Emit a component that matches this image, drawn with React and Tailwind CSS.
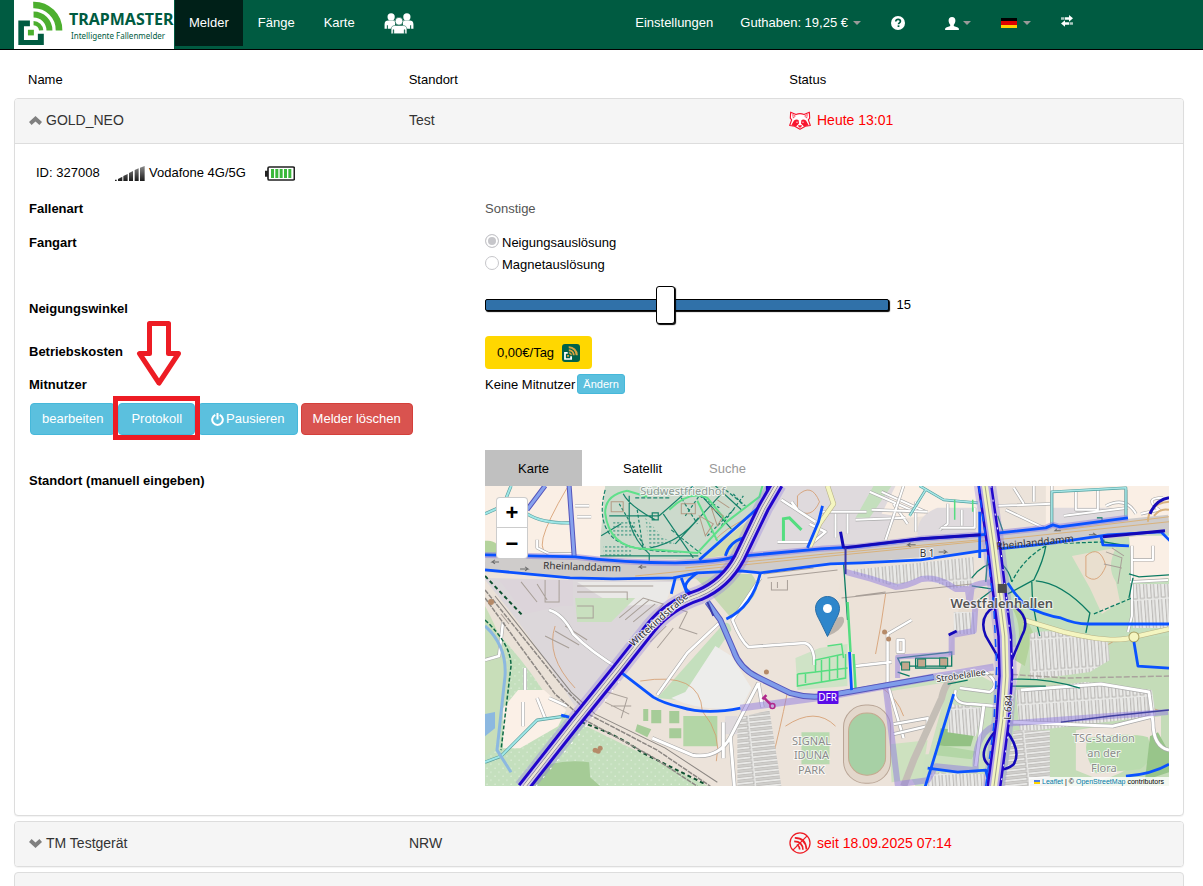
import React, { useState } from "react";

const DEVICES = [
  { id: "327008", name: "GOLD_NEO", place: "Test", status: "Heute 13:01", icon: "raccoon" },
  { id: "327009", name: "TM Testgerät", place: "NRW", status: "seit 18.09.2025 07:14", icon: "offline" },
];

/* ---------- icons ---------- */

const LogoMark = ({ className, box = "#005b41", waves = "#4caf2e" }) => (
  <svg viewBox="0 0 136 136" className={className} aria-hidden="true">
    <path d="M1 59h35v17H18v42h42V99h18v34H1z" fill={box} />
    <path d="M30 87h18v17H30z" fill={waves} />
    <g fill="none" stroke={waves}>
      <path d="M46 12a76 76 0 0 1 78 77" strokeWidth="20" />
      <path d="M47 41a48 48 0 0 1 48 48" strokeWidth="18" />
      <path d="M47 67a23 23 0 0 1 23 22" strokeWidth="13" />
    </g>
  </svg>
);

const GroupIcon = () => (
  <svg viewBox="0 0 90 64" className="w-[30px] h-[21px]" aria-hidden="true">
    <g fill="#fff">
      <circle cx="21" cy="12" r="11" />
      <circle cx="69" cy="12" r="11" />
      <path d="M1 48V34c0-8 5-11 11-11h18c3 0 4 1 5 3-4 7-2 12 1 16-8 1-12 2-13 6H11V37H8v11z" />
      <path d="M89 48V34c0-8-5-11-11-11H60c-3 0-4 1-5 3 4 7 2 12-1 16 8 1 12 2 13 6h12V37h3v11z" />
    </g>
    <path
      d="M21 63V50c0-8 5-12 12-12h24c7 0 12 4 12 12v13h-6V51h-2v12H29V51h-2v12z"
      fill="#fff"
      stroke="#005b41"
      strokeWidth="1.500"
    />
    <circle cx="45" cy="25" r="12" fill="#fff" stroke="#005b41" strokeWidth="2" />
  </svg>
);

const UserIcon = () => (
  <svg viewBox="0 0 14 13" className="w-[14px] h-[13px]" aria-hidden="true">
    <path
      d="M7 0c2.200 0 3.500 1.500 3.400 3.800C10.300 5.500 9.600 6.900 8.800 7.800v1.100c1.200.8 4.200 1 4.900 2.300.2.500.2 1.200.2 1.800H.1c0-.6 0-1.300.2-1.800C1 9.900 4 9.700 5.200 8.900V7.800C4.400 6.900 3.700 5.500 3.600 3.800 3.500 1.500 4.800 0 7 0z"
      fill="#fff"
    />
  </svg>
);

const HelpIcon = () => (
  <svg viewBox="0 0 14 14" className="size-[14px]" aria-hidden="true">
    <circle cx="7" cy="7" r="7" fill="#fff" />
    <path d="M4.800 5.600c0-1.500.9-2.300 2.300-2.300s2.300.8 2.300 2c0 1.600-1.900 1.500-1.900 3" fill="none" stroke="#005b41" strokeWidth="1.700" />
    <path d="M6.600 9.300h1.800V11H6.600z" fill="#005b41" />
  </svg>
);

const TransferIcon = () => (
  <svg viewBox="0 0 36 36" className="size-3" aria-hidden="true" fill="#fff">
    <path d="M24 0l12 10-12 10v-6H12V7h12zM1 7h4v7H1zM7 7h3v7H7z" />
    <path d="M12 16v6h12v7H12v6L0 25.500zM26 22h3v7h-3zM31 22h4v7h-4z" />
  </svg>
);

const GermanFlag = () => (
  <svg viewBox="0 0 16 10" className="w-4 h-[10px]" aria-hidden="true">
    <path d="M0 0h16v4H0z" fill="#000" />
    <path d="M0 3h16v4H0z" fill="#dd0000" />
    <path d="M0 7h16v3H0z" fill="#ffce00" />
  </svg>
);

const Caret = () => (
  <svg viewBox="0 0 8 4" className="w-2 h-1" aria-hidden="true">
    <path d="M0 0h8L4 4z" fill="#999" />
  </svg>
);

const Chevron = ({ up }) => (
  <svg viewBox="0 0 13 9" className="w-[13px] h-[9px]" aria-hidden="true">
    <path d={up ? "M6.500 0L13 6 10.400 9 6.500 5.600 2.600 9 0 6z" : "M6.500 9L13 3 10.400 0 6.500 3.400 2.600 0 0 3z"} fill="#808080" />
  </svg>
);

const PowerIcon = () => (
  <svg viewBox="0 0 13 13" className="size-[13px]" aria-hidden="true" fill="none" stroke="#fff" strokeWidth="2">
    <path d="M4.300 1.800a5.300 5.300 0 1 0 4.400 0" />
    <path d="M6.500 0v6.500" />
  </svg>
);

const SignalIcon = () => (
  <svg viewBox="0 0 90 45" className="w-[30px] h-[15px]" aria-hidden="true">
    <defs>
      <linearGradient id="bars" x1="0" y1="0" x2="0" y2="1">
        <stop offset="0" stopColor="#8a8a8a" />
        <stop offset="1" stopColor="#1c1c1c" />
      </linearGradient>
    </defs>
    <path
      d="M0 41h5v4H0zM9 39l13-7v13H9zM25 30l13-6v21H25zM42 21l12-6v30H42zM59 12l12-5v38H59zM75 5l14-5v45H75z"
      fill="url(#bars)"
    />
  </svg>
);

const BatteryIcon = () => (
  <svg viewBox="0 0 90 45" className="w-[30px] h-[15px]" aria-hidden="true">
    <path d="M0 14h10v18H0z" fill="#222" />
    <rect x="9" y="3" width="79" height="39" rx="4" fill="#fff" stroke="#222" strokeWidth="5" />
    <path d="M18 9h9v27h-9zM31 9h9v27h-9zM44 9h9v27h-9zM57 9h9v27h-9zM70 9h9v27h-9z" fill="#3bb83b" />
  </svg>
);

const RaccoonIcon = () => (
  <svg viewBox="0 0 66 56" className="w-[22px] h-[19px]" aria-hidden="true">
    <path
      d="M5 3l16 7q12-5 24 0l16-7 1 18-4 5 6 17-15 2-16 9-16-9-15-2 6-17-4-5z"
      fill="#fff"
      stroke="#f8152f"
      strokeWidth="3.500"
      strokeLinejoin="round"
    />
    <path d="M11 10l8 4-6 7zM55 10l-8 4 6 7z" fill="none" stroke="#f8152f" strokeWidth="2" />
    <path d="M7 42l8-14q8-6 14-1l1 10-9 9zM59 42l-8-14q-8-6-14-1l-1 10 9 9z" fill="#f8152f" />
    <circle cx="24" cy="33" r="2" fill="#fff" />
    <circle cx="42" cy="33" r="2" fill="#fff" />
    <path d="M27 42h12l-3 7h-6z" fill="#f8152f" />
  </svg>
);

const OfflineIcon = () => (
  <svg viewBox="0 0 68 68" className="size-[22px]" aria-hidden="true" fill="none" stroke="#ee1c24">
    <circle cx="34" cy="34" r="31" strokeWidth="4" />
    <path d="M12 56L56 12" strokeWidth="4" />
    <path d="M18 18q34 0 36 36M16 29q26 0 27 26M24 39q9 4 9 15" strokeWidth="5" />
  </svg>
);

/* ---------- map ---------- */

const Road = ({ d, w = 3, casing = "#aaa", fill = "#fff" }) => (
  <g fill="none" strokeLinejoin="round">
    <path d={d} stroke={casing} strokeWidth={w + 1.2} />
    <path d={d} stroke={fill} strokeWidth={w} />
  </g>
);

const WITTEKIND = "M38 302L90 236 132 184 166 141Q184 119 214 109 240 98 254 72L278 22 292 -2";
const L684 = "M499 -2L508 61 514 110 519 150 520 190 517 234 508 302";
const NORTH_LANE = "M0 69L90 71Q140 77 190 77 235 76 248 71L335 63 370 61 435 53 495 49 560 42 567 39 574 41 642 32";
const SOUTH_LANE = "M0 84L85 92 128 93 188 92 212 87 255 85 275 87 345 78 376 77 435 74 495 65 560 58 622 49 675 46 684 55";
const STROBEL = "M222 116l13 18 13 30q6 18 24 27l33 16q20 6 40 2l103-18";

const CityMap = () => (
  <svg
    viewBox="0 0 683 300"
    preserveAspectRatio="xMidYMid slice"
    className="block w-full h-full"
    role="img"
    aria-label="Karte Dortmund Westfalenhallen"
    fontFamily="'Noto Sans', sans-serif"
  >
    <defs>
      <pattern id="lot" width="7" height="32" patternUnits="userSpaceOnUse" patternTransform="rotate(-4)">
        <rect width="7" height="32" fill="#e9e9e7" />
        <path d="M1 0v30h4V0" fill="none" stroke="#b5b3b0" strokeWidth="1" />
      </pattern>
      <pattern id="lotFlat" width="34" height="5" patternUnits="userSpaceOnUse" patternTransform="rotate(-6)">
        <rect width="34" height="5" fill="#e9e9e7" />
        <path d="M0 1h32v3H0" fill="none" stroke="#b5b3b0" strokeWidth="1" />
      </pattern>
      <pattern id="dots" width="8" height="8" patternUnits="userSpaceOnUse">
        <rect width="8" height="8" fill="#c4dfbd" />
        <circle cx="2" cy="2" r=".7" fill="#e4f1e0" />
        <circle cx="6" cy="6" r=".7" fill="#e4f1e0" />
      </pattern>
      <pattern id="graves" width="4" height="4" patternUnits="userSpaceOnUse">
        <path d="M0 1h2" stroke="#0c8068" strokeWidth="1" />
      </pattern>
    </defs>

    {/* land use */}
    <rect width="683" height="300" fill="#ece3da" />
    <path d="M0 0h120v72L0 68z" fill="#faefe5" />
    <path d="M0 55q14-2 16 14L0 68z" fill="#b4d39c" />
    <path d="M120 0h174L214 74l-99-3V55z" fill="#ccdacc" />
    <path d="M290 12L262 66 216 73z" fill="#d3dcb1" />
    <path d="M296 0h130l-30 60-132 8z" fill="#dfdadd" />
    <path d="M388 0h18l-22 32h-14z" fill="#c4dfbd" />
    <path d="M410 0h82v26l-70 6-26-4z" fill="#faefe5" />
    <path d="M452 22h38v28h-58q-2-20 20-28z" fill="#dfdadd" />
    <path d="M512 0h171v32l-165 18z" fill="#faefe5" />
    <path d="M512 0h48v44l-46 5z" fill="#ece3da" />
    <path d="M565 22h76v12l-76 8z" fill="#dfdadd" />
    <path d="M0 92l90 2 98 1-28 45-50 60-30 30Q50 190 0 110z" fill="#dcd7da" />
    <path d="M92 96h96l-8 22-50 2z" fill="#eae9e7" />
    <path d="M90 112h60l-24 24H92z" fill="#c9e0bf" />
    <path d="M206 88h60q18 20-22 42l-22-26z" fill="#c6d9b2" />
    <path d="M14 94h74v26H76L40 128z" fill="#dcd4da" />
    <path d="M0 94q50 60 92 130l136 74H0z" fill="#eae1d7" />
    <path d="M0 134q40 40 65 82l28 20 130 64H0z" fill="url(#dots)" />
    <path d="M33 204h26l22 20-8 16-38 22H18v-40z" fill="#fbf0e7" />
    <path d="M0 120q22 40 24 74L10 262 0 270z" fill="#c8deb9" />
    <path d="M48 284q26-12 56-8l1 15 10 9H42z" fill="#a5cb96" />
    <path d="M172 212l66-74q6-4 8 6l-40 58-14 12z" fill="#c4dfbd" />
    <path d="M200 206l30-46 16 10 20 32-10 20q-40 4-70-10z" fill="#ededeb" />
    <path d="M158 223h5v12h-5zM166 224h10v13h-10zM184 225h10v12h-10zM152 238l14 5-4 8-12-6zM184 242h12v10h-12z" fill="#a6cc98" />
    <path d="M198 230h34v30h-34z" fill="#b3d6a6" />
    <path d="M240 230h12v18h-14z" fill="#dfdadd" />
    <path d="M515 48l168-14v140h-40L520 160 508 90z" fill="#c4dfbd" />
    <path d="M586 70l44-8q-10 20 0 34l4 20-18 12-12-26z" fill="#e9dfcf" />
    <path d="M643 50h40v42l-36 4z" fill="#faefe5" />
    <path d="M540 160l143-10v150H505z" fill="#c4dcb8" />
    <path d="M404 196l80-12 30 16-6 100H430l-16-28z" fill="#cbe0bf" />
    <path d="M470 98l42 8-4 74-52 4q-30-30-20-70z" fill="#e6dcd0" />
    <path d="M525 120q14 20 4 54l10 6 8-34-16-34z" fill="#b4d39c" />
    <path d="M356 92l130 10-14 24-12 56-120 22-8-12z" fill="#ece2d8" />
    <path d="M310 172l24-10 28-4v42l-50 4z" fill="#cfe3c6" />
    <path d="M399 206l64-10-20 72h-36z" fill="#e9dfd5" />
    <path d="M404 258l38-4-6 38-30 4z" fill="#cde1bf" />
    <path d="M455 242l34 4-4 14h-34z" fill="#93c184" />
    <path d="M454 259l36 6-4 8-36-4z" fill="#b3d6a6" />
    <path d="M590 244l85-14v24q-24 30-60 40l-25-10z" fill="#ece3da" />
    <path d="M602 252q40-6 60-1 8 22-8 32l-44 4q-14-20-8-35z" fill="#b9dbae" />
    <path d="M664 250l8-4 11 20v20l-24 8z" fill="#98c58a" />
    <path d="M316 246h28v32h-28z" fill="#b9dab0" />

    {/* stadium oval */}
    <rect x="358" y="219" width="47" height="78" rx="22" fill="#e3d7cb" stroke="#b9a596" />
    <rect x="363" y="227" width="37" height="62" rx="18" fill="#a7d0a5" stroke="#c5a98f" />
    <g fill="none" stroke="#d59a6a" strokeWidth=".8">
      <path d="M82 2q-20 34-24 50t10 20M230 54q8-10 32-22M400 108q-4 30-10 60M302 206q-8 40-16 70" />
      <path d="M155 195q60-10 62 30 20 24 14 50M70 140q-10 30 20 62M300 240q30-20 50 0M394 200q18 12 24 30" />
      <path d="M600 70q14-12 20 10-8 20-20 10zM545 235q80-30 130-10M560 160q40 14 70-6M312 10q14-14 22 6-8 18-22 8z" />
    </g>

    {/* car parks */}
    <g fill="url(#lot)">
      <path d="M366 84l122-13v28l-22 4-30-12-26 10-44-14z" />
      <path d="M544 148q20-8 78 8l2 18-20 12-60 8z" />
      <path d="M530 204l70-8 66 8 4 26-136 16z" />
      <path d="M647 98h36v44h-36z" />
      <path d="M464 218l34 4-8 28-28-4z" />
      <path d="M442 286l60 2v12h-64z" />
      <path d="M468 126h22v22h-22z" />
    </g>
    <g fill="url(#lotFlat)">
      <path d="M252 232l32-8 12 76h-44z" />
      <path d="M528 244h36v56h-46z" />
    </g>
    <g fill="none" stroke="#a89f98" strokeWidth="1">
      <path d="M134 132l24-20 20 6-22 26M140 134l24-20M148 136l22-18M92 120h16v12H92M92 100h76M92 106h50v8" />
      <path d="M36 96l16 20M52 98l10 16M60 94v22h14V94M16 128l8 10M60 150l24 12M70 145l24 14M80 140l22 14" />
      <path d="M158 150l14-18M165 156l16-16M172 162l16-20M186 120l16 6-8 16 18 6M122 206l20 6-6 20M126 220h20M120 216l24 12" />
      <path d="M278 88l50-6M282 92l70-8M286 96v8h16v-10M292 96v6M356 112l130-14M370 110l30-4M620 66l16 6-4 26M626 62l12 8M618 78l18 4" />
    </g>

    {/* cemetery paths */}
    <path d="M128 36h22v16h-22zM160 32l18 20 12 6-26 4zM118 60h28v10h-28z" fill="url(#graves)" />
    <g fill="none" stroke="#17836b" strokeWidth="1.200">
      <path d="M124 30h50M144 10v26q6 20 20 32v8M174 30l34-30M178 28l30 44M170 34q-26-14-32-26M167 27h6v7h-6z" />
      <path d="M165 62q30-6 48-30M190 58l46-50M212 5l34 38M230 0l26 24M116 50l20-12M115 70h98" />
      <path d="M200 30l14-20 20 12M222 50l28-28M236 40l22-30M248 8l10 12M152 24l6 40M134 18l26 44" strokeDasharray="3 2" />
      <path d="M120 4q-8 30 6 46t70 16M160 6l30 2M150 12h36M186 44l30 24M196 12l16 26M240 4l20 16" strokeDasharray="4 2" />
    </g>
    <path
      d="M142 5q-22 4-22 22 4 34 38 36l54 4 28-30 34-26 3-11M212 15l20 40M142 5l20 6M184 24q20-20 38-12l18 22"
      fill="none"
      stroke="#5fe08a"
      strokeWidth="2"
    />
    <g fill="none" stroke="#b29a84" strokeWidth="1">
      <path d="M126 16h12v10h-12zM196 18h14v10h-14zM214 30l14 8-8 12zM226 22l12 8-6 10zM232 14l12 8" />
    </g>

    {/* local streets */}
    <Road d="M90 20h14M92 31h14M52 54v8l12 6h26" w={2} />
    <Road d="M296 14l34 22M292 56h36l12-10-16-8M312 24l-6-8" w={2.500} />
    <Road d="M335 26h46M350 28v24M362 28v20M384 6l46 20M396 6l44 20M408 18l14 20M430 16v30M370 34l50-2M462 18v20l-8 6M476 24v16" w={2} />
    <Road d="M418 0l-18 54M386 24l56 2M455 42l34 0v-20" w={2} />
    <Road d="M512 20l54-2M520 24l38 18M528 2l10 16M548 0v16M578 30l64-8M590 6v18h22V4M620 20q20-10 30 8M655 28l18-4q-16-12 4-12" w={2} />
    <Road d="M64 124Q78 128 88 148 106 166 136 184M40 204v-22M38 240v-24M60 232l-8-20M82 220l-18-8M0 174l14-4 4-34" w={2.500} />
    <Road d="M172 209l30-42 34-32M275 92l-28 42q8 20 16 27l56-4q10 2 10 22" w={2.500} />
    <Road d="M167 252l40 17q26 4 38-18l28-54M245 250l4 50M238 236q0 20 0 36M273 197l4 24" w={3} />
    <Road d="M402 148v50l16 54M402 148l24-14M370 180l36-4M412 154h6v12h-6z" w={2.500} />
    <Road d="M474 202l30 4q12-8-4-20M470 204q-4 14 16 14l24 2M408 238l34-6v8l-34 8" w={2.500} />
    <Road d="M535 204l80-6 48 8 4 30q0 24 16 28M527 236l100 4 40-10M498 220l-8 60" w={3} />
    <Road d="M646 60v70l-4 16M644 96l38-2M566 0v40M640 4v26M645 74h22V60" w={2} />
    <Road d="M566 40V6l74-4v30" w={1.500} casing="#4f9f9f" fill="#a8e6e6" />
    <Road d="M434 0l24 14 34 3M440 4l-16 26" w={1.500} casing="#4f9f9f" fill="#a8e6e6" />
    <Road d="M26 0l-8 20-18 8M42 28q16 10 46 9M0 276l16-6 36-36 28-4" w={2} casing="#5c9f9f" fill="#9fe7e7" />
    <path d="M0 140q22 20 20 50l-8 74 14 22" fill="none" stroke="#8cb8e0" strokeWidth="3" />
    <path d="M0 228l10-2v16L0 250z" fill="#8cb8e0" />
    <path d="M0 134q26 24 26 46l-10 84" fill="none" stroke="#0e6a45" strokeWidth="1.500" strokeDasharray="4 2" />
    <path d="M0 90L38 130M96 236q40 14 60 30l64 32" fill="none" stroke="#0e5030" strokeWidth="2" strokeDasharray="4 3" />
    <g fill="none" stroke="#8c8783" strokeWidth="1.500">
      <path d="M0 104l78 97 27 28 67 35 53 36M0 112l70 96 30 26 66 36 46 30" strokeDasharray="5 1" />
      <path d="M10 110l76 96 24 22 70 34 52 34" strokeWidth="1" />
      <path d="M470 190l50-2 60 4 103-2" stroke="#aaa49d" strokeDasharray="6 2" />
    </g>
    <path d="M470 192q-10 2-14 20l-28 62-10 26" fill="none" stroke="#c4beb6" strokeWidth="7" />

    {/* park footpaths */}
    <g fill="none" stroke="#0b7b63" strokeWidth="1.300">
      <path d="M522 108l26-14M548 94q10-20 12-34M546 96q0 26 8 54M550 95q26 2 54 32l-4 20M512 30l8 24M486 92q14-18 30-14 8 8 10 18" />
      <path d="M502 70l-2 26M488 118l24-18M486 100l26 4M510 200h50M516 194q40-4 78 8" />
      <path d="M560 60q-22 12-34 36M608 128l38-16M560 58l60-2" strokeDasharray="4 2" />
      <path d="M357 62l5 72M611 32h5l2 24 24 4M643 88l10 3 30-2M647 92l-4 20M412 172l54-6v14h-50z" />
      <path d="M430 172h30v10h-30zM412 186l12 4M482 194l-20 4" />
    </g>
    <g fill="#c3a78d" stroke="#0b7b63">
      <path d="M416 176h8v8h-8zM432 173h8v8h-8zM454 172h8v8h-8z" />
    </g>
    <g fill="none" stroke="#55dd80">
      <path d="M362 116l3 50M368 168l2 34" strokeWidth="2.500" />
      <path d="M312 188l18-2v-12l28-6M312 188v12l48-8v-24M330 186l32-4M320 187v10M336 174v22M344 172v22M352 170v22M342 160l14-2 2 14" strokeWidth="1.500" />
      <path d="M298 55v-22l6-1 12 12" strokeWidth="3" />
      <path d="M469 14v20M487 14v12" strokeWidth="1.500" />
    </g>

    {/* trunk road */}
    <path d="M0 77L90 82 188 86 248 79 335 71 495 57 683 38" fill="none" stroke="#cfcccb" strokeWidth="18" />
    <path d="M150 90L248 80 345 70 500 55 683 36M200 82l140-14 155-14M570 45l113-14" fill="none" stroke="#d8b27c" strokeWidth="1" />
    <path d="M662 36q0-18 21-20M668 30q6-8 15-6" fill="none" stroke="#d8b27c" strokeWidth="2" />

    {/* yellow secondary roads */}
    <Road d="M342 0l6 18-14 20-10 24" w={4} casing="#b9b387" fill="#f4f5c0" />
    <Road d="M538 134l40 12q50 12 70 5l35-8" w={4} casing="#b9b387" fill="#f4f5c0" />
    <circle cx="648" cy="151" r="5" fill="#f4f5c0" stroke="#a89f60" />

    {/* transit halo lines */}
    <g fill="none" stroke="#8f7be0" strokeOpacity=".5" strokeLinejoin="round">
      <path d="M255 222l90-12 103-19 60-10" strokeWidth="7" />
      <path d="M360 86l26 7 24 8q10 0 26-8 12-2 24 4l10 6h12l2 14 2-16q10-6 28-4M490 115l-2 30-22 4v20" strokeWidth="6" />
      <path d="M400 200l12 98 30-4 8-14 40 4q-2-40 24-46l110-8 58-4" strokeWidth="6" />
      <path d="M412 192v-21l54-3" strokeWidth="5" />
      <path d={WITTEKIND} strokeWidth="19" strokeOpacity=".35" />
      <path d={L684} strokeWidth="22" strokeOpacity=".35" />
      <path d={NORTH_LANE} strokeWidth="6" />
    </g>
    <g fill="none">
      <path d={STROBEL} stroke="#5555bb" strokeWidth="6" />
      <path d={STROBEL} stroke="#7f9cea" strokeWidth="4" />
      <path d="M60 0L42 24M84 0l5 70" stroke="#5555bb" strokeWidth="5" />
      <path d="M60 0L42 24M84 0l5 70" stroke="#88a2ee" strokeWidth="3" />
      <path d="M575 236l50-6 58-6" stroke="#4040a0" strokeWidth="1.500" />
    </g>

    {/* cycle routes */}
    <g fill="none" stroke="#0a52ff" strokeWidth="2.800" strokeLinejoin="round">
      <path d={NORTH_LANE} />
      <path d={SOUTH_LANE} />
      <path d="M214 74l70-62M240 70q4-14 18-18 8 4-4 14M275 87q-8 34-34 46M190 92l-4 16M196 92l6 16M212 87q-20 14-6 20" />
      <path d="M133 184l35 27q10 6 27 10 26 8 60 1M76 229l8 2" />
      <path d="M522 97q10 16 20 24 16 8 33 11 14 6 27 6h81" />
      <path d="M648 156l4 24 31 2M494 26v46M364 166l2 38M468 208l-22 72-7 22M442 282l30 4 28-2 4 16M640 290q26-2 43-12M337 20l-4 16-11 26" />
      <path d="M615 50l2 9 26 1" />
    </g>
    <g fill="none" stroke="#1409b8" strokeWidth="3">
      <path d="M358 62l77-9 60-4M355 46l3 16M664 28q6-14 19-16M282 0v16M463 149l8-4M617 51l62-6" />
      <path d="M360 62v26M222 116l6 14" strokeWidth="2" stroke="#3a38a8" />
      <path d="M510 120q-18 10-10 30l14 24M528 120q18 12 8 30l-10 24" strokeWidth="2.500" />
      <path d="M514 240q-24 26-12 38 14 10 26 0 8-14-8-34" strokeWidth="2.500" />
    </g>
    <g fill="none">
      <path d={WITTEKIND} stroke="#2206cc" strokeWidth="13" />
      <path d={WITTEKIND} stroke="#cfc6e6" strokeWidth="7" />
      <path d={WITTEKIND} stroke="#6e6b80" strokeWidth="3.500" />
      <path d={WITTEKIND} stroke="#ece8d4" strokeWidth="2.500" />
      <path d={L684} stroke="#2206cc" strokeWidth="15" />
      <path d={L684} stroke="#b3a4e4" strokeWidth="10" />
      <path d={L684} stroke="#f1f3c2" strokeWidth="6" />
      <path d={L684} stroke="#a7a98a" strokeWidth="1" />
      <path d="M51 300l50-60 34-46" stroke="#fff" strokeWidth="1" strokeDasharray="2 9" />
      <path d="M505 0l10 64 7 60 5 60-4 60-8 56" stroke="#fff" strokeWidth="1" strokeDasharray="2 12" />
      <path d="M493 0l8 60 7 60 3 60-3 60-8 60" stroke="#0a52ff" strokeWidth="1.500" strokeDasharray="8 6" />
    </g>

    <g stroke="#6b6b6b" fill="none" strokeWidth="1">
      <path d="M14 76H7l3-2M7 76l3 2M35 83h8l-3-2M43 83l-3 2M161 81h-7l3-2M154 81l3 2M453 66h8l-3-2M461 66l-3 2M430 59h-8l3-2M422 59l3 2M603 49h7l-3-2M575 45h-6l2-2" />
    </g>
    <path d="M512 98h9v9h-9z" fill="#4d4d4d" />
    <g fill="none" stroke="#b0288c" strokeWidth="2.500">
      <circle cx="287" cy="220" r="2.500" strokeWidth="1.500" />
      <path d="M279 212l6 6M277 213l4-4" />
    </g>
    <g fill="#b58a68">
      <circle cx="110" cy="264" r="2.500" />
      <circle cx="115" cy="262" r="2.500" />
      <circle cx="113" cy="265" r="2.500" />
      <circle cx="281" cy="186" r="2.500" />
      <circle cx="399" cy="146" r="2.500" />
      <circle cx="403" cy="153" r="2.500" />
      <circle cx="6" cy="116" r="3" />
    </g>

    {/* labels */}
    <g paintOrder="stroke" stroke="#fff" strokeOpacity=".75" strokeWidth="2" strokeLinejoin="round" fontSize="10">
      <text x="155" y="9" fill="#8d9a92" fontSize="11">Südwestfriedhof</text>
      <text x="58" y="83" fill="#333" transform="rotate(2 58 83)" stroke="none">Rheinlanddamm</text>
      <text x="511" y="64" fill="#333" transform="rotate(-6 511 64)" stroke="none">Rheinlanddamm</text>
      <text x="434" y="71" fill="#333">B 1</text>
      <text x="148" y="161" fill="#333" transform="rotate(-42 148 161)">Wittekindstraße</text>
      <text x="451" y="196" fill="#333" transform="rotate(-8 451 196)" fontSize="9">Strobelallee</text>
      <text x="525" y="234" fill="#333" transform="rotate(-86 525 234)">L 684</text>
      <text x="516" y="122" fill="#555" fontSize="13" fontWeight="600" textAnchor="middle">Westfalenhallen</text>
      <g fill="#8b8b8b" fontSize="11" textAnchor="middle">
        <text x="326" y="259">SIGNAL</text>
        <text x="326" y="273">IDUNA</text>
        <text x="326" y="288">PARK</text>
        <text x="618" y="256">TSC-Stadion</text>
        <text x="618" y="271">an der</text>
        <text x="618" y="286">Flora</text>
      </g>
    </g>
    <rect x="332" y="205" width="21" height="13" rx="1" fill="#5a0be8" />
    <text x="342" y="215" fill="#fff" fontSize="10" textAnchor="middle">DFR</text>
  </svg>
);

const MapMarker = () => (
  <svg viewBox="0 0 40 41" className="w-10 h-[41px]" aria-hidden="true">
    <path d="M13 40L22 22q8-4 7 4-3 9-16 14z" fill="#000" fillOpacity=".2" />
    <path
      d="M12.500 .5C5.600 .5.500 6 .5 12.500c0 4.500 2.300 8.500 5 13.500l7 14.500 7-14.500c2.700-5 5-9 5-13.500C24.500 6 19.400.5 12.500.5z"
      fill="#2e86cb"
      stroke="#2a6ea6"
    />
    <circle cx="12.500" cy="12.500" r="4.500" fill="#fff" />
  </svg>
);

/* ---------- page ---------- */

const NavBar = () => (
  <nav className="flex h-[50px] items-start border-b border-black bg-[#005b41] pl-[14px] pr-[130px] text-white">
    <a href="#home" className="mr-px flex h-[49px] w-40 shrink-0 items-start bg-white">
      <LogoMark className="ml-1 mt-px size-[45px] shrink-0" />
      <span className="ml-[6px] flex flex-col pt-[9px] font-['Noto_Sans',sans-serif] text-[#005b41]">
        <span className="text-[16px] leading-[20px] font-bold">TRAPMASTER</span>
        <span className="pl-[2px] text-[8px] leading-[14px] whitespace-nowrap">Intelligente Fallenmelder</span>
      </span>
    </a>
    <div className="flex h-[46px]">
      <a href="#melder" className="flex items-center bg-[#002018] px-[14px]">Melder</a>
      <a href="#faenge" className="flex items-center px-[15px]">Fänge</a>
      <a href="#karte" className="flex items-center px-[14px]">Karte</a>
      <a href="#gruppe" className="flex items-center px-[15px]" aria-label="Gruppe">
        <GroupIcon />
      </a>
    </div>
    <div className="ml-auto flex h-[46px]">
      <a href="#einstellungen" className="flex items-center px-3">Einstellungen</a>
      <button className="flex items-center gap-[5px] px-[15px]">
        Guthaben: 19,25 € <Caret />
      </button>
      <a href="#hilfe" className="flex items-center px-[15px]" aria-label="Hilfe">
        <HelpIcon />
      </a>
      <button className="ml-[10px] flex items-center gap-1 px-[15px]" aria-label="Konto">
        <UserIcon />
        <Caret />
      </button>
      <button className="flex items-center gap-[6px] px-[15px]" aria-label="Sprache">
        <GermanFlag />
        <Caret />
      </button>
      <a href="#wechseln" className="flex items-center pb-1 pl-[15px]" aria-label="Wechseln">
        <TransferIcon />
      </a>
    </div>
  </nav>
);

const Protocol = () => (
  <div className="relative">
    <button className="h-8 rounded-[4px] border border-[#46b8da] bg-[#5bc0de] px-3 text-white">Protokoll</button>
    <div className="pointer-events-none absolute -inset-x-[5px] -top-[7px] -bottom-[5px] border-[5px] border-[#ed1c24]" />
    <svg
      viewBox="0 0 46 65"
      className="pointer-events-none absolute bottom-[49px] left-[18px] h-[65px] w-[46px]"
      aria-hidden="true"
    >
      <path
        d="M13.500 2.500h19v30h10L23 62 3.500 32.500h10z"
        fill="#fff"
        stroke="#ed1c24"
        strokeWidth="5"
        strokeLinejoin="round"
      />
    </svg>
  </div>
);

const MapPanel = () => (
  <div>
    <div className="flex h-9">
      <button className="bg-[#c0c0c0] px-[33px] pt-[2px]">Karte</button>
      <button className="ml-2 px-[33px] pt-[2px]">Satellit</button>
      <input
        type="text"
        aria-label="Suche"
        placeholder="Suche"
        className="ml-[14px] w-40 pt-[2px] outline-none placeholder:text-[#999]"
      />
    </div>
    <div className="relative h-[300px] overflow-hidden">
      <CityMap />
      <div className="absolute top-[11px] left-[11px] flex w-[32px] flex-col rounded-[4px] border border-black/20 bg-white font-bold">
        <button aria-label="Vergrößern" className="flex h-[30px] items-center justify-center border-b border-[#ccc] text-[22px]">
          +
        </button>
        <button aria-label="Verkleinern" className="flex h-[30px] items-center justify-center text-[22px]">
          −
        </button>
      </div>
      <div className="absolute top-[110px] left-[330px]">
        <MapMarker />
      </div>
      <div className="absolute right-0 bottom-0 flex items-center bg-white/80 px-[5px] text-[7px] leading-[9px]">
        <svg viewBox="0 0 6 4" className="mr-[2px] h-1 w-[6px]" aria-hidden="true">
          <path d="M0 0h6v2H0z" fill="#4c7be1" />
          <path d="M0 2h6v2H0z" fill="#ffd500" />
        </svg>
        <a href="#leaflet" className="text-[#0078a8]">Leaflet</a>
        <span className="px-[2px]">| ©</span>
        <a href="#osm" className="pr-[2px] text-[#0078a8]">OpenStreetMap</a>
        contributors
      </div>
    </div>
  </div>
);

const radioClass =
  "-mt-1 size-[14px] appearance-none rounded-full border border-[#c6c6ca] bg-white checked:bg-[#c6c6ca] checked:shadow-[inset_0_0_0_2px_#fff]";

const DeviceDetails = ({ device }) => {
  const [angle, setAngle] = useState(15);

  return (
    <div className="border-t border-[#ddd] px-[14px] pt-5 pb-[29px]">
      <div className="flex h-[18px] items-center pl-[7px]">
        <span className="w-[79px]">ID: {device.id}</span>
        <SignalIcon />
        <span className="ml-1 w-[116px]">Vodafone 4G/5G</span>
        <BatteryIcon />
      </div>

      <div className="mt-[17px] grid grid-cols-[2fr_3fr] leading-5">
        <strong>Fallenart</strong>
        <span className="text-[#555]">Sonstige</span>
      </div>

      <div className="mt-[13px] grid grid-cols-[2fr_3fr] leading-[22px]">
        <strong>Fangart</strong>
        <div>
          <label className="flex items-center gap-[3px]">
            <input type="radio" name="fangart" defaultChecked disabled className={radioClass} />
            Neigungsauslösung
          </label>
          <label className="flex items-center gap-[3px]">
            <input type="radio" name="fangart" disabled className={radioClass} />
            Magnetauslösung
          </label>
        </div>
      </div>

      <div className="mt-[10px] grid h-[50px] grid-cols-[2fr_3fr]">
        <label htmlFor="angle" className="leading-[46px] font-bold">Neigungswinkel</label>
        <div className="flex h-[38px] items-center gap-2">
          <input
            id="angle"
            type="range"
            min="3"
            max="30"
            value={angle}
            onChange={(e) => setAngle(Number(e.target.value))}
            className="h-[38px] w-[59%] appearance-none bg-transparent [&::-webkit-slider-runnable-track]:h-[12px] [&::-webkit-slider-runnable-track]:rounded-[2px] [&::-webkit-slider-runnable-track]:border [&::-webkit-slider-runnable-track]:border-black [&::-webkit-slider-runnable-track]:bg-[#3071a9] [&::-webkit-slider-runnable-track]:shadow-[1px_1px_1px_#000] [&::-webkit-slider-thumb]:-mt-[14px] [&::-webkit-slider-thumb]:h-[38px] [&::-webkit-slider-thumb]:w-[19px] [&::-webkit-slider-thumb]:appearance-none [&::-webkit-slider-thumb]:rounded-[3px] [&::-webkit-slider-thumb]:border [&::-webkit-slider-thumb]:border-black [&::-webkit-slider-thumb]:bg-white [&::-webkit-slider-thumb]:shadow-[1px_1px_1px_#000]"
          />
          <output htmlFor="angle">{angle}</output>
        </div>
      </div>

      <div className="grid grid-cols-[2fr_3fr] leading-8">
        <strong>Betriebskosten</strong>
        <button className="flex h-[33px] w-[107px] items-center justify-between rounded-[4px] bg-[#ffd700] px-3">
          0,00€/Tag
          <span className="flex size-[18px] items-center justify-center rounded-[3px] bg-[#00614a]">
            <LogoMark className="size-[14px]" box="#fff" waves="#d9a441" />
          </span>
        </button>
      </div>

      <div className="mt-[5px] grid grid-cols-[2fr_3fr] leading-[22px]">
        <strong>Mitnutzer</strong>
        <div className="flex items-start gap-[2px]">
          Keine Mitnutzer
          <button className="h-5 rounded-[3px] border border-[#46b8da] bg-[#5bc0de] px-[5px] text-[11px] leading-[18px] text-white">
            Ändern
          </button>
        </div>
      </div>

      <div className="mt-[7px] flex gap-[3px] pl-px">
        <button className="h-8 rounded-[4px] border border-[#46b8da] bg-[#5bc0de] px-[11px] text-white">bearbeiten</button>
        <Protocol />
        <button className="flex h-8 items-center gap-[2px] rounded-[4px] border border-[#46b8da] bg-[#5bc0de] px-3 text-white">
          <PowerIcon />
          Pausieren
        </button>
        <button className="h-8 rounded-[4px] border border-[#d43f3a] bg-[#d9534f] px-[11px] text-white">Melder löschen</button>
      </div>

      <div className="mt-[15px] grid grid-cols-[2fr_3fr]">
        <strong className="pt-[21px] leading-5">Standort (manuell eingeben)</strong>
        <MapPanel />
      </div>
    </div>
  );
};

const DevicePanel = ({ device, open, onToggle }) => (
  <section className="overflow-hidden rounded-[4px] border border-[#ddd] bg-white shadow-[0_1px_1px_rgba(0,0,0,0.05)]">
    <div className="grid h-11 grid-cols-3 items-center bg-[#f5f5f5] px-[14px] pb-[2px] text-[14px] text-[#333]">
      <button onClick={onToggle} aria-expanded={open} className="flex items-center gap-1 text-left">
        <Chevron up={open} />
        {device.name}
      </button>
      <span>{device.place}</span>
      <span className="flex items-center gap-[6px] text-[#f00]">
        {device.icon === "raccoon" ? <RaccoonIcon /> : <OfflineIcon />}
        {device.status}
      </span>
    </div>
    {open && <DeviceDetails device={device} />}
  </section>
);

export default function App() {
  const [openId, setOpenId] = useState("327008");

  return (
    <div className="min-h-screen bg-white font-['Liberation_Sans',Arial,sans-serif] text-[13px] text-black">
      <NavBar />
      <main className="mr-[19px] ml-[14px]">
        <div className="grid h-12 grid-cols-3 items-center px-[14px] pt-3">
          <span>Name</span>
          <span>Standort</span>
          <span>Status</span>
        </div>
        <div className="flex flex-col gap-[5px]">
          {DEVICES.map((d) => (
            <DevicePanel
              key={d.id}
              device={d}
              open={openId === d.id}
              onToggle={() => setOpenId(openId === d.id ? null : d.id)}
            />
          ))}
          <section className="h-[46px] rounded-[4px] border border-[#ddd] bg-[#f5f5f5]" />
        </div>
      </main>
    </div>
  );
}
